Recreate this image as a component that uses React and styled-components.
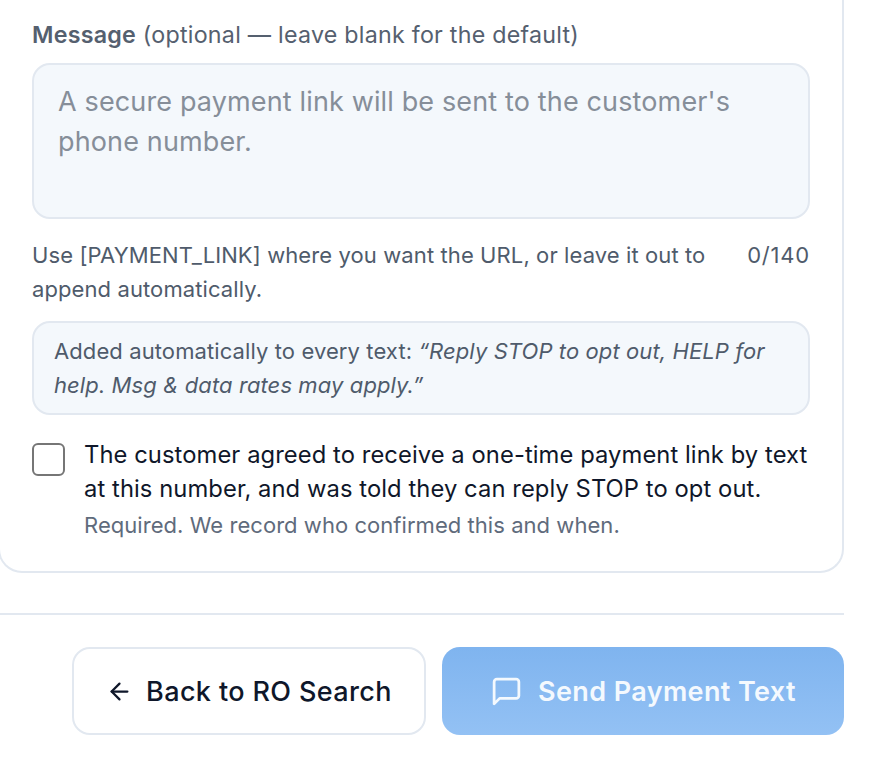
import React from "react";
import styled, { createGlobalStyle } from "styled-components";

const Global = createGlobalStyle`
  html, body { margin: 0; padding: 0; background: #fff; }
  body { font-family: Inter, "Liberation Sans", sans-serif; -webkit-font-smoothing: antialiased; }
  * { box-sizing: border-box; }
`;
const Page = styled.div`
  width: 876px; height: 768px; overflow: hidden; padding-right: 32px;
`;
const Card = styled.section`
  height: 573px; margin-left: -2px; background: #fff;
  border: 2px solid #e2e8f0; border-top: none;
  border-radius: 0 0 24px 24px;
  padding: 21px 32px 0 32px;
`;
const FieldLabel = styled.div`
  font-size: 23.25px; line-height: 28px; color: #55606f; letter-spacing: 0.24px;
  strong { font-weight: 600; color: #55606f; }
`;
const Area = styled.div`
  margin-top: 14px; height: 156px; background: #f4f8fc;
  border: 2px solid #e2e8f0; border-radius: 18px;
  padding: 17px 24px; font-size: 27px; line-height: 40px; color: #868e99; letter-spacing: 0.14px;
`;
const HintRow = styled.div`
  display: flex; justify-content: space-between; gap: 24px; margin-top: 19px;
  font-size: 22px; line-height: 34px; color: #4f5b6b; letter-spacing: 0.1px;
`;
const Hint = styled.div`width: 690px;`;
const Counter = styled.div`flex: none; letter-spacing: 0.8px;`;
const Note = styled.div`
  margin-top: 15px; height: 94px; background: #f4f8fc;
  border: 2px solid #e2e8f0; border-radius: 18px; padding: 11px 20px;
  font-size: 22px; line-height: 34px; color: #4f5b6b; letter-spacing: 0.1px;
  em { font-style: italic; }
`;
const Consent = styled.div`display: flex; gap: 19px; margin-top: 23px;`;
const Box = styled.span`
  flex: none; width: 33px; height: 33px; margin-top: 5px;
  border: 2px solid #767676; border-radius: 6px; background: #fff;
`;
const ConsentText = styled.div`font-size: 23.75px; line-height: 34px; color: #0f172a; letter-spacing: 0.08px;`;
const Required = styled.div`font-size: 22px; line-height: 34px; color: #5f6b7c; margin-top: 2px; letter-spacing: 0.05px;`;
const Footer = styled.footer`
  margin-top: 40px; border-top: 2px solid #e2e8f0; padding-top: 32px;
  display: flex; justify-content: flex-end; gap: 16px;
`;
const Btn = styled.button`
  height: 88px; border-radius: 18px; display: flex; align-items: center; justify-content: center;
  font-family: inherit; font-size: 27px; padding: 0; letter-spacing: 0.38px;
`;
const Back = styled(Btn)`
  width: 354px; gap: 13px; background: #fff; border: 2px solid #e2e8f0; color: #0f172a; font-weight: 500;
`;
const Send = styled(Btn)`
  width: 402px; gap: 15px; border: none; color: #f4f9fe; font-weight: 600;
  background: linear-gradient(180deg, #7fb4ef 0%, #93c1f4 100%);
`;

export default function App() {
  return (
    <Page>
      <Global />
      <Card>
        <FieldLabel><strong>Message</strong> (optional — leave blank for the default)</FieldLabel>
        <Area>A secure payment link will be sent to the customer's phone number.</Area>
        <HintRow>
          <Hint>Use [PAYMENT_LINK] where you want the URL, or leave it out to append automatically.</Hint>
          <Counter>0/140</Counter>
        </HintRow>
        <Note>Added automatically to every text: <em>“Reply STOP to opt out, HELP for help. Msg &amp; data rates may apply.”</em></Note>
        <Consent>
          <Box />
          <div>
            <ConsentText>The customer agreed to receive a one-time payment link by text at this number, and was told they can reply STOP to opt out.</ConsentText>
            <Required>Required. We record who confirmed this and when.</Required>
          </div>
        </Consent>
      </Card>
      <Footer>
        <Back>
          <svg width="27" height="27" viewBox="0 0 24 24" fill="none" stroke="currentColor" strokeWidth="2" strokeLinecap="round" strokeLinejoin="round"><path d="M19 12H5" /><path d="M12 19l-7-7 7-7" /></svg>
          Back to RO Search
        </Back>
        <Send>
          <svg width="33" height="33" viewBox="0 0 24 24" fill="none" stroke="currentColor" strokeWidth="2" strokeLinecap="round" strokeLinejoin="round"><path d="M21 15a2 2 0 0 1-2 2H7l-4 4V5a2 2 0 0 1 2-2h14a2 2 0 0 1 2 2z" /></svg>
          Send Payment Text
        </Send>
      </Footer>
    </Page>
  );
}
